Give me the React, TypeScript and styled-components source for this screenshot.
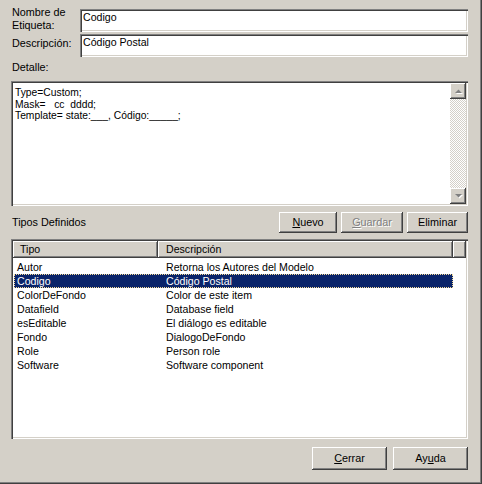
import React from 'react';
import styled, { createGlobalStyle, css } from 'styled-components';

const FONT = `"Liberation Sans", Arial, sans-serif`;

const Global = createGlobalStyle`
  html, body { margin: 0; padding: 0; background: #d4d0c8; }
  body { font-family: ${FONT}; }
`;

const sunken = css`
  box-shadow: inset 1px 1px #808080, inset 2px 2px #404040,
    inset -1px -1px #ffffff, inset -2px -2px #d4d0c8;
`;

const raised = css`
  box-shadow: inset -1px -1px #404040, inset 1px 1px #ffffff,
    inset -2px -2px #808080;
`;

const Dialog = styled.div`
  box-sizing: border-box;
  width: 482px;
  height: 484px;
  background: #d4d0c8;
  padding: 6px 14px 0 11px;
  box-shadow: inset -1px -1px #404040, inset -2px -2px #808080;
  display: flex;
  flex-direction: column;
  font-family: ${FONT};
  font-size: 10.8px;
  color: #000;
`;

const FieldRow = styled.div<{ $mt?: number }>`
  display: grid;
  grid-template-columns: 69px 1fr;
  align-items: start;
  margin-top: ${(p) => p.$mt ?? 0}px;
`;

const Label = styled.div<{ $pt?: number }>`
  padding-left: 1px;
  padding-top: ${(p) => p.$pt ?? 0}px;
  line-height: 13px;
  white-space: pre-line;
`;

const TextBox = styled.div<{ $mt?: number }>`
  box-sizing: border-box;
  height: 23px;
  margin-top: ${(p) => p.$mt ?? 0}px;
  background: #fff;
  ${sunken};
  padding: 2px 3px;
  font-size: 10.6px;
  line-height: 13px;
  white-space: pre;
`;

const SectionLabel = styled.div`
  margin-top: 4px;
  padding-left: 1px;
  line-height: 13px;
`;

const Memo = styled.div`
  box-sizing: border-box;
  margin-top: 7px;
  height: 125px;
  background: #fff;
  ${sunken};
  display: flex;
  padding: 2px;
`;

const MemoText = styled.div`
  flex: 1;
  padding: 4px 2px;
  font-size: 10.3px;
  line-height: 11.5px;
  white-space: pre;
`;

const ScrollBar = styled.div`
  width: 16px;
  display: flex;
  flex-direction: column;
`;

const ScrollBtn = styled.div`
  width: 16px;
  height: 16px;
  box-sizing: border-box;
  background: #d4d0c8;
  ${raised};
  display: flex;
  align-items: center;
  justify-content: center;
`;

const Track = styled.div`
  flex: 1;
  background: repeating-conic-gradient(#d4d0c8 0 25%, #ffffff 0 50%) 0 0 / 2px 2px;
`;

const Toolbar = styled.div`
  margin-top: 6px;
  height: 21px;
  display: flex;
  align-items: center;
  gap: 4px;
`;

const ToolbarLabel = styled.div`
  flex: 1;
  padding-left: 1px;
  line-height: 13px;
`;

const Button = styled.div<{ $w: number; $h?: number; $disabled?: boolean }>`
  box-sizing: border-box;
  width: ${(p) => p.$w}px;
  height: ${(p) => p.$h ?? 21}px;
  background: #d4d0c8;
  ${raised};
  display: flex;
  align-items: center;
  justify-content: center;
  font-size: 10.8px;
  padding-bottom: 1px;
  color: ${(p) => (p.$disabled ? '#808080' : '#000')};
  text-shadow: ${(p) => (p.$disabled ? '1px 1px #ffffff' : 'none')};
  u { text-underline-offset: 1px; }
`;

const List = styled.div`
  box-sizing: border-box;
  margin-top: 6px;
  height: 200px;
  background: #fff;
  ${sunken};
  padding: 2px;
  display: flex;
  flex-direction: column;
`;

const Header = styled.div`
  display: flex;
  height: 17px;
  flex: none;
`;

const HeaderCell = styled.div<{ $w?: number; $pl?: number }>`
  box-sizing: border-box;
  ${(p) => (p.$w ? `width: ${p.$w}px;` : 'flex: 1;')}
  height: 17px;
  background: #d4d0c8;
  ${raised};
  padding-left: ${(p) => p.$pl ?? 0}px;
  font-size: 10.6px;
  line-height: 17px;
`;

const Rows = styled.div`
  padding-top: 2px;
  display: flex;
  flex-direction: column;
`;

const Row = styled.div<{ $sel?: boolean }>`
  box-sizing: border-box;
  margin-left: 1px;
  width: 439px;
  height: 14px;
  padding-top: 1px;
  display: grid;
  grid-template-columns: 152px 1fr;
  font-size: 10.6px;
  line-height: 13px;
  white-space: nowrap;
  ${(p) =>
    p.$sel &&
    css`
      background: #0a246a;
      color: #fff;
      outline: 1px dotted #f5db95;
      outline-offset: -1px;
    `}
`;

const Cell = styled.span<{ $pl?: number }>`
  padding-left: ${(p) => p.$pl ?? 0}px;
`;

const Footer = styled.div`
  margin-top: 8px;
  display: flex;
  justify-content: flex-end;
  gap: 6px;
`;

const Arrow = ({ up }: { up?: boolean }) => (
  <svg width="9" height="6" viewBox="0 0 9 6">
    {up ? (
      <>
        <path d="M1 5h7L4.5 1.5z" fill="#ffffff" transform="translate(1 1)" />
        <path d="M1 5h7L4.5 1.5z" fill="#808080" />
      </>
    ) : (
      <>
        <path d="M1 1h7L4.5 4.5z" fill="#ffffff" transform="translate(1 1)" />
        <path d="M1 1h7L4.5 4.5z" fill="#808080" />
      </>
    )}
  </svg>
);

const rows: [string, string][] = [
  ['Autor', 'Retorna los Autores del Modelo'],
  ['Codigo', 'Código Postal'],
  ['ColorDeFondo', 'Color de este item'],
  ['Datafield', 'Database field'],
  ['esEditable', 'El diálogo es editable'],
  ['Fondo', 'DialogoDeFondo'],
  ['Role', 'Person role'],
  ['Software', 'Software component'],
];

export default function App() {
  return (
    <>
      <Global />
      <Dialog>
        <FieldRow>
          <Label>{'Nombre de\nEtiqueta:'}</Label>
          <TextBox $mt={3}>Codigo</TextBox>
        </FieldRow>
        <FieldRow $mt={2}>
          <Label $pt={3}>Descripción:</Label>
          <TextBox>Código Postal</TextBox>
        </FieldRow>
        <SectionLabel>Detalle:</SectionLabel>
        <Memo>
          <MemoText>
            {'Type=Custom;\nMask=   cc  dddd;\nTemplate= state:___, Código:_____;'}
          </MemoText>
          <ScrollBar>
            <ScrollBtn>
              <Arrow up />
            </ScrollBtn>
            <Track />
            <ScrollBtn>
              <Arrow />
            </ScrollBtn>
          </ScrollBar>
        </Memo>
        <Toolbar>
          <ToolbarLabel>Tipos Definidos</ToolbarLabel>
          <Button $w={58}>
            <span>
              <u>N</u>uevo
            </span>
          </Button>
          <Button $w={62} $disabled>
            <span>
              <u>G</u>uardar
            </span>
          </Button>
          <Button $w={61}>Eliminar</Button>
        </Toolbar>
        <List>
          <Header>
            <HeaderCell $w={145} $pl={7}>
              Tipo
            </HeaderCell>
            <HeaderCell $w={295} $pl={8}>
              Descripción
            </HeaderCell>
            <HeaderCell />
          </Header>
          <Rows>
            {rows.map(([t, d], i) => (
              <Row key={t} $sel={i === 1}>
                <Cell $pl={3}>{t}</Cell>
                <Cell>{d}</Cell>
              </Row>
            ))}
          </Rows>
        </List>
        <Footer>
          <Button $w={75} $h={23}>
            <span>
              <u>C</u>errar
            </span>
          </Button>
          <Button $w={75} $h={23}>
            <span>
              Ay<u>u</u>da
            </span>
          </Button>
        </Footer>
      </Dialog>
    </>
  );
}
